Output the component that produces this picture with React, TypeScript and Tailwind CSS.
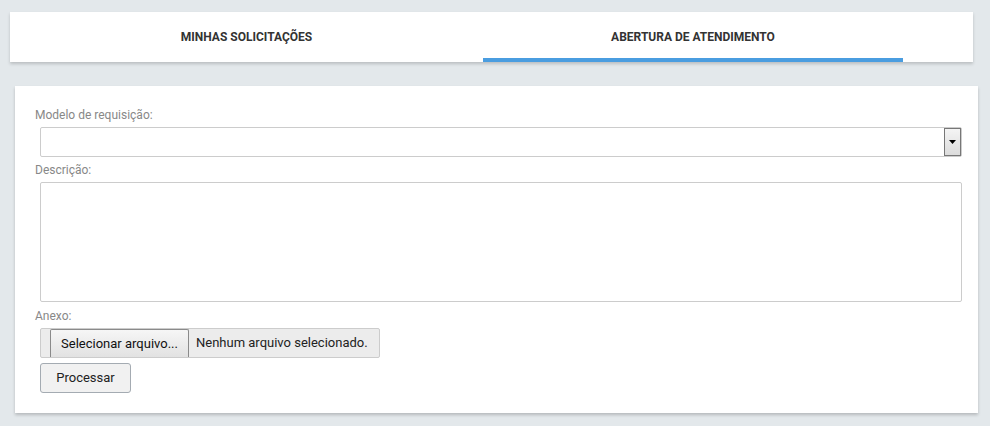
import React from "react";

const font = { fontFamily: "Roboto, 'Liberation Sans', sans-serif" };

function Tabs() {
  return (
    <div className="ml-[10px] mt-[12px] flex h-[50px] w-[963px] bg-white shadow-[0_2px_3px_rgba(0,0,0,0.18)]">
      <div className="flex w-[473px] items-center justify-center text-[12px] font-bold text-[#333]">
        MINHAS SOLICITAÇÕES
      </div>
      <div className="flex w-[420px] flex-col">
        <div className="flex flex-1 items-center justify-center pt-[4px] text-[12px] font-bold text-[#333]">
          ABERTURA DE ATENDIMENTO
        </div>
        <div className="h-[4px] bg-[#4a9de0]" />
      </div>
    </div>
  );
}

function Label({ children }: { children: React.ReactNode }) {
  return <div className="h-[14px] pl-[20px] text-[12px] leading-[14px] text-[#888]">{children}</div>;
}

export default function App() {
  return (
    <div className="h-[426px] w-[990px] overflow-hidden bg-[#e3e8eb]" style={font}>
      <Tabs />
      <div className="ml-[15px] mt-[24px] flex w-[963px] flex-col bg-white pb-[20px] pr-[16px] pt-[22px] shadow-[0_2px_3px_rgba(0,0,0,0.2)]">
        <Label>Modelo de requisição:</Label>
        <div className="ml-[25px] mt-[5px] flex h-[30px] items-stretch justify-end rounded-[2px] border border-[#ccc] bg-white">
          <div className="flex w-[17px] items-center justify-center border border-[#777] bg-gradient-to-b from-[#f4f4f4] to-[#dcdcdc]">
            <svg width="7" height="4" viewBox="0 0 7 4">
              <path d="M0 0H7L3.5 4Z" fill="#000" />
            </svg>
          </div>
        </div>
        <div className="mt-[6px]">
          <Label>Descrição:</Label>
        </div>
        <div className="ml-[25px] mt-[5px] h-[120px] rounded-[2px] border border-[#ccc] bg-white" />
        <div className="mt-[7px]">
          <Label>Anexo:</Label>
        </div>
        <div className="ml-[25px] mt-[5px] flex h-[30px] w-[340px] items-end whitespace-nowrap rounded-[2px] border border-[#ccc] bg-[#ececec] pl-[9px]">
          <div className="flex h-[28px] w-[139px] items-center justify-center rounded-t-[2px] border border-b-0 border-[#8a8a8a] bg-gradient-to-b from-[#f6f6f6] to-[#e2e2e2] text-[13px] text-[#111]">
            Selecionar arquivo...
          </div>
          <div className="flex h-full items-center pl-[7px] text-[13px] text-[#222]">Nenhum arquivo selecionado.</div>
        </div>
        <div className="ml-[25px] mt-[5px] flex h-[30px] w-[91px] items-center justify-center rounded-[3px] border border-[#a4abb2] bg-[#f1f1f1] text-[13px] text-[#222]">
          Processar
        </div>
      </div>
    </div>
  );
}
